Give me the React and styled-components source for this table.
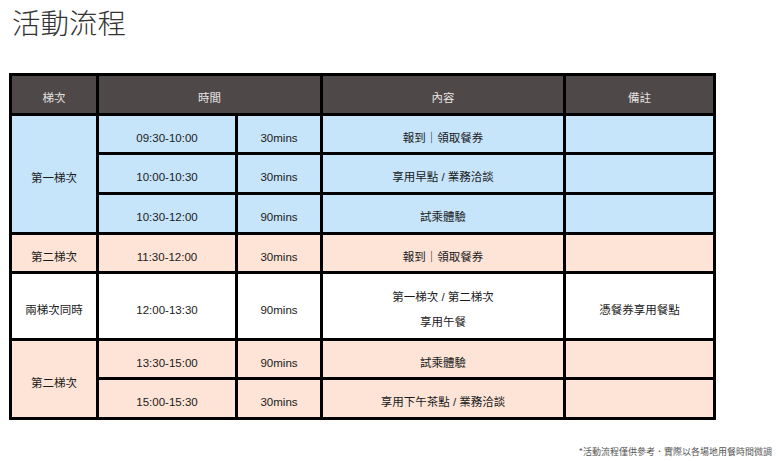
import React from "react";
import styled, { createGlobalStyle } from "styled-components";

const Global = createGlobalStyle`
  html, body { margin: 0; padding: 0; background: #ffffff; }
  body {
    font-family: "Liberation Sans", "Noto Sans CJK TC", sans-serif;
    color: #1a1a1a;
  }
`;

const Page = styled.div`
  width: 780px;
  height: 461px;
  box-sizing: border-box;
  padding: 8px 8px 0 9px;
  display: flex;
  flex-direction: column;
`;

const Title = styled.h1`
  margin: 0 0 37px 3px;
  font-family: "Noto Sans CJK TC", sans-serif;
  font-weight: 300;
  font-size: 28.5px;
  line-height: 28px;
  color: #333;
`;

const Table = styled.div`
  display: grid;
  width: 707px;
  box-sizing: border-box;
  grid-template-columns: 84px 136px 82px 240px 147px;
  grid-template-rows: 37px 36px 37px 37px 36px 64px 36px 37px;
  gap: 3px;
  padding: 3px;
  background: #000;
`;

const tones = {
  head: "#4f4848",
  blue: "#c6e5fb",
  peach: "#fde4d6",
  white: "#ffffff",
};

const Cell = styled.div`
  background: ${(p) => tones[p.$tone]};
  color: ${(p) => (p.$tone === "head" ? "#e6e3e3" : "#1a1a1a")};
  grid-column: ${(p) => (p.$colSpan ? `span ${p.$colSpan}` : "auto")};
  grid-row: ${(p) => (p.$rowSpan ? `span ${p.$rowSpan}` : "auto")};
  display: flex;
  flex-direction: column;
  align-items: center;
  justify-content: center;
  padding-top: 7px;
  box-sizing: border-box;
  font-size: 11.5px;
  line-height: 14px;
  text-align: center;
`;

const Line = styled.span`
  display: block;
  line-height: 25px;
`;

const Note = styled.p`
  margin: 26px 0 0 0;
  align-self: flex-end;
  font-family: "Noto Sans CJK TC", sans-serif;
  font-size: 9px;
  line-height: 12px;
  color: #555;
`;

const rows = [
  { tone: "blue", group: { text: "第一梯次", span: 3 }, time: "09:30-10:00", dur: "30mins", content: ["報到｜領取餐券"], note: "" },
  { tone: "blue", time: "10:00-10:30", dur: "30mins", content: ["享用早點 / 業務洽談"], note: "" },
  { tone: "blue", time: "10:30-12:00", dur: "90mins", content: ["試乘體驗"], note: "" },
  { tone: "peach", group: { text: "第二梯次", span: 1 }, time: "11:30-12:00", dur: "30mins", content: ["報到｜領取餐券"], note: "" },
  { tone: "white", group: { text: "兩梯次同時", span: 1 }, time: "12:00-13:30", dur: "90mins", content: ["第一梯次 / 第二梯次", "享用午餐"], note: "憑餐券享用餐點" },
  { tone: "peach", group: { text: "第二梯次", span: 2 }, time: "13:30-15:00", dur: "90mins", content: ["試乘體驗"], note: "" },
  { tone: "peach", time: "15:00-15:30", dur: "30mins", content: ["享用下午茶點 / 業務洽談"], note: "" },
];

export default function App() {
  return (
    <>
      <Global />
      <Page>
        <Title>活動流程</Title>
        <Table>
          <Cell $tone="head">梯次</Cell>
          <Cell $tone="head" $colSpan={2}>時間</Cell>
          <Cell $tone="head">內容</Cell>
          <Cell $tone="head">備註</Cell>
          {rows.map((r, i) => (
            <React.Fragment key={i}>
              {r.group && (
                <Cell $tone={r.tone} $rowSpan={r.group.span}>
                  {r.group.text}
                </Cell>
              )}
              <Cell $tone={r.tone}>{r.time}</Cell>
              <Cell $tone={r.tone}>{r.dur}</Cell>
              <Cell $tone={r.tone}>
                {r.content.length > 1
                  ? r.content.map((c) => <Line key={c}>{c}</Line>)
                  : r.content[0]}
              </Cell>
              <Cell $tone={r.tone}>{r.note}</Cell>
            </React.Fragment>
          ))}
        </Table>
        <Note>*活動流程僅供參考．實際以各場地用餐時間微調</Note>
      </Page>
    </>
  );
}
